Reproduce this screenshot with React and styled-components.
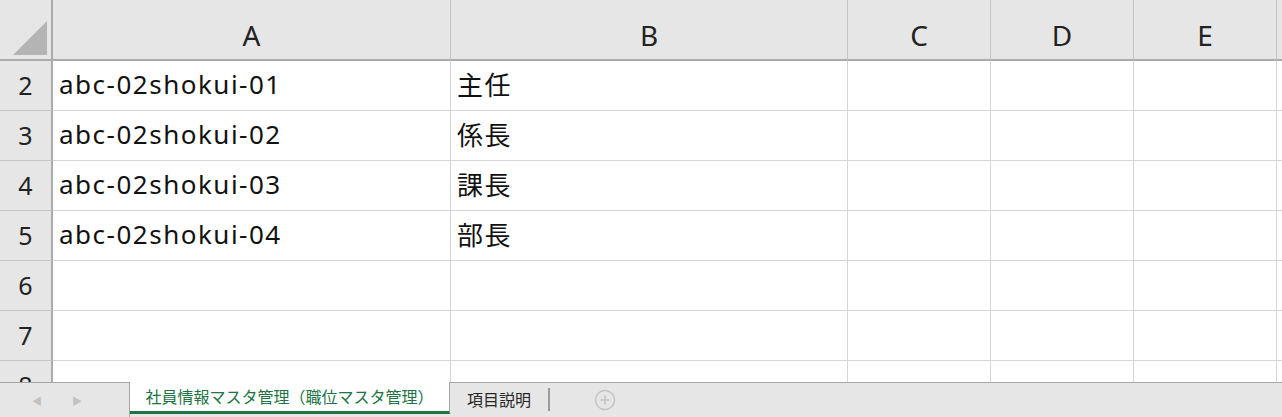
import React from 'react';
import styled, { createGlobalStyle } from 'styled-components';

const GlobalStyle = createGlobalStyle`
  html, body {
    margin: 0;
    padding: 0;
    background: #fff;
  }
  body {
    font-family: "Noto Sans", "Noto Sans CJK JP", sans-serif;
    overflow: hidden;
  }
`;

const Window = styled.div`
  width: 1282px;
  height: 417px;
  display: flex;
  flex-direction: column;
  overflow: hidden;
`;

const Sheet = styled.div`
  flex: 1;
  overflow: hidden;
  display: grid;
  grid-template-columns: 53px 398px 397px 143px 143px 143px 1fr;
  grid-auto-rows: 50px;
  grid-template-rows: 61px;
  align-content: start;
`;

const Corner = styled.div`
  background: #e6e6e6;
  border-right: 2px solid #ababab;
  border-bottom: 2px solid #ababab;
  box-sizing: border-box;
  position: relative;
  overflow: hidden;

  &::after {
    content: '';
    position: absolute;
    right: 4px;
    bottom: 4px;
    width: 0;
    height: 0;
    border-left: 34px solid transparent;
    border-bottom: 34px solid #b4b4b4;
  }
`;

const ColHead = styled.div`
  background: #e6e6e6;
  border-bottom: 2px solid #ababab;
  border-right: 1px solid #c4c4c4;
  box-sizing: border-box;
  display: flex;
  align-items: center;
  justify-content: center;
  padding-top: 10px;
  font-size: 28px;
  color: #222;
`;

const RowHead = styled.div`
  background: #e6e6e6;
  border-right: 2px solid #ababab;
  border-bottom: 1px solid #c6c6c6;
  box-sizing: border-box;
  display: flex;
  align-items: center;
  justify-content: center;
  font-size: 25px;
  color: #222;
  padding-bottom: 2px;
`;

const Cell = styled.div`
  border-right: 1px solid #d6d6d6;
  border-bottom: 1px solid #d6d6d6;
  box-sizing: border-box;
  display: flex;
  align-items: center;
  padding-left: 6px;
  padding-bottom: 4px;
  font-size: 26px;
  letter-spacing: 1.5px;
  color: #111;
  white-space: nowrap;
`;

const TabBar = styled.div`
  height: 35px;
  flex: none;
  background: #e6e6e6;
  border-top: 1px solid #a6a6a6;
  box-sizing: border-box;
  display: flex;
  align-items: stretch;
  font-family: "Noto Sans CJK JP", sans-serif;
`;

const Nav = styled.div`
  width: 130px;
  border-right: 1px solid #a6a6a6;
  display: flex;
  align-items: center;
  gap: 30px;
  padding-left: 32px;
  box-sizing: border-box;
  color: #c2c2c2;
  font-size: 10px;
`;

const Tab = styled.div`
  display: flex;
  align-items: center;
  justify-content: center;
  box-sizing: border-box;
  font-size: 16px;
  white-space: nowrap;
  width: ${p => p.$w}px;
  color: ${p => (p.$active ? '#217346' : '#262626')};
  background: ${p => (p.$active ? '#fff' : 'transparent')};
  margin-top: ${p => (p.$active ? '-1px' : '0')};
  margin-bottom: ${p => (p.$active ? '3px' : '0')};
  border-bottom: ${p => (p.$active ? '3px solid #217346' : 'none')};
  border-right: ${p => (p.$active ? '1px solid #a6a6a6' : 'none')};
  padding-bottom: 2px;
`;

const Divider = styled.div`
  width: 2px;
  background: #9a9a9a;
  margin: 5px 0 6px;
`;

const AddButton = styled.div`
  display: flex;
  align-items: center;
  padding-left: 44px;
`;

const cols = ['A', 'B', 'C', 'D', 'E', ''];
const rows = [
  [2, 'abc-02shokui-01', '主任'],
  [3, 'abc-02shokui-02', '係長'],
  [4, 'abc-02shokui-03', '課長'],
  [5, 'abc-02shokui-04', '部長'],
  [6, '', ''],
  [7, '', ''],
  [8, '', ''],
];

export default function App() {
  return (
    <Window>
      <GlobalStyle />
      <Sheet>
        <Corner />
        {cols.map((c, i) => (
          <ColHead key={i}>{c}</ColHead>
        ))}
        {rows.map(([n, a, b]) => (
          <React.Fragment key={n}>
            <RowHead>{n}</RowHead>
            <Cell>{a}</Cell>
            <Cell>{b}</Cell>
            <Cell />
            <Cell />
            <Cell />
            <Cell />
          </React.Fragment>
        ))}
      </Sheet>
      <TabBar>
        <Nav>
          <span>◀</span>
          <span>▶</span>
        </Nav>
        <Tab $active $w={320}>社員情報マスタ管理（職位マスタ管理）</Tab>
        <Tab $w={98}>項目説明</Tab>
        <Divider />
        <AddButton>
          <svg width="22" height="22" viewBox="0 0 22 22">
            <circle cx="11" cy="11" r="9.5" fill="none" stroke="#c4c4c4" strokeWidth="1.5" />
            <path d="M11 6.5v9M6.5 11h9" stroke="#c4c4c4" strokeWidth="1.5" />
          </svg>
        </AddButton>
      </TabBar>
    </Window>
  );
}
